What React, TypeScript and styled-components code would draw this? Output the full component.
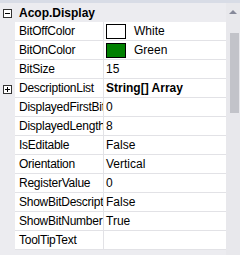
import React from "react";
import styled, { createGlobalStyle } from "styled-components";

const GlobalStyle = createGlobalStyle`
  html, body {
    margin: 0;
    padding: 0;
    background: #ececf0;
  }
  * {
    box-sizing: border-box;
  }
`;

const Panel = styled.div`
  width: 240px;
  height: 255px;
  display: flex;
  flex-direction: column;
  border-top: 3px solid #d8dce6;
  background: #ececf0;
  font-family: "Liberation Sans", Arial, sans-serif;
  font-size: 12px;
  color: #000;
  overflow: hidden;
`;

const Body = styled.div`
  flex: 1;
  display: flex;
  min-height: 0;
`;

const Grid = styled.div`
  flex: 1;
  display: flex;
  flex-direction: column;
`;

const CategoryRow = styled.div`
  height: 19px;
  display: grid;
  grid-template-columns: 15px 1fr;
  align-items: center;
  background: #ececf0;
`;

const CategoryTitle = styled.div`
  font-weight: bold;
  padding-left: 4px;
  white-space: nowrap;
`;

const Row = styled.div`
  height: 19px;
  display: grid;
  grid-template-columns: 15px 89px 1fr;
`;

const Gutter = styled.div`
  display: flex;
  align-items: center;
  justify-content: flex-start;
  padding-left: 3px;
  background: #ececf0;
`;

const NameCell = styled.div`
  background: #fff;
  border-right: 1px solid #e2e2e6;
  border-bottom: 1px solid #e2e2e6;
  padding-left: 4px;
  line-height: 18px;
  letter-spacing: -0.25px;
  white-space: nowrap;
  overflow: hidden;
  text-overflow: clip;
`;

const ValueCell = styled.div<{ $bold?: boolean }>`
  background: #fff;
  border-bottom: 1px solid #e2e2e6;
  padding-left: 2px;
  display: flex;
  align-items: center;
  gap: 8px;
  white-space: nowrap;
  overflow: hidden;
  font-weight: ${(p) => (p.$bold ? "bold" : "normal")};
`;

const Swatch = styled.span<{ $color: string }>`
  width: 20px;
  height: 15px;
  border: 1px solid #000;
  background: ${(p) => p.$color};
  flex: none;
`;

const ToggleBox = styled.span`
  position: relative;
  width: 9px;
  height: 9px;
  border: 1px solid #333;
  background: #fff;
  margin-top: 2px;

  &::before {
    content: "";
    position: absolute;
    left: 1px;
    top: 3px;
    width: 5px;
    height: 1px;
    background: #000;
  }
`;

const PlusBox = styled(ToggleBox)`
  &::after {
    content: "";
    position: absolute;
    left: 3px;
    top: 1px;
    width: 1px;
    height: 5px;
    background: #000;
  }
`;

const Scrollbar = styled.div`
  width: 14px;
  background: #e8e8ec;
  display: flex;
  flex-direction: column;
  align-items: center;
`;

const ArrowUp = styled.div`
  margin-top: 7px;
  width: 0;
  height: 0;
  border-left: 4px solid transparent;
  border-right: 4px solid transparent;
  border-bottom: 4px solid #86899a;
`;

const Thumb = styled.div`
  margin-top: 19px;
  margin-left: 3px;
  width: 9px;
  height: 80px;
  background: #c2c3c9;
`;

type Prop = {
  name: string;
  value: string;
  swatch?: string;
  bold?: boolean;
  expandable?: boolean;
};

const props: Prop[] = [
  { name: "BitOffColor", value: "White", swatch: "#ffffff" },
  { name: "BitOnColor", value: "Green", swatch: "#008000" },
  { name: "BitSize", value: "15" },
  { name: "DescriptionList", value: "String[] Array", bold: true, expandable: true },
  { name: "DisplayedFirstBit", value: "0" },
  { name: "DisplayedLength", value: "8" },
  { name: "IsEditable", value: "False" },
  { name: "Orientation", value: "Vertical" },
  { name: "RegisterValue", value: "0" },
  { name: "ShowBitDescription", value: "False" },
  { name: "ShowBitNumber", value: "True" },
  { name: "ToolTipText", value: "" },
];

export default function App() {
  return (
    <>
      <GlobalStyle />
      <Panel>
        <Body>
          <Grid>
            <CategoryRow>
              <Gutter>
                <ToggleBox />
              </Gutter>
              <CategoryTitle>Acop.Display</CategoryTitle>
            </CategoryRow>
            {props.map((p) => (
              <Row key={p.name}>
                <Gutter>{p.expandable && <PlusBox />}</Gutter>
                <NameCell>{p.name}</NameCell>
                <ValueCell $bold={p.bold}>
                  {p.swatch && <Swatch $color={p.swatch} />}
                  {p.value}
                </ValueCell>
              </Row>
            ))}
          </Grid>
          <Scrollbar>
            <ArrowUp />
            <Thumb />
          </Scrollbar>
        </Body>
      </Panel>
    </>
  );
}
